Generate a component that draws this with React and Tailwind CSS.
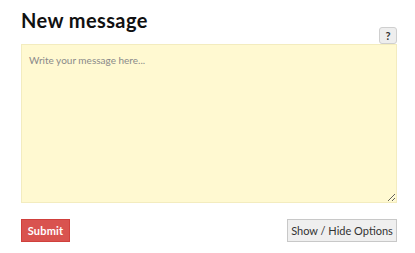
export default function App() {
    return (
        <div className="w-[415px] h-[253px] bg-white pl-[21px] pr-[18px] pt-[9px] font-['Lato',sans-serif] overflow-hidden">
            <h1 className="text-[20px] leading-[22px] font-bold tracking-[0.4px] text-[#111]">New message</h1>

            <div className="flex justify-end mt-[-4px]">
                <button className="w-[18px] h-[17px] rounded-[3px] border border-[#cfcfcf] bg-[#eeeeee] text-[11px] font-bold leading-none text-[#333] flex items-center justify-center">
                    ?
                </button>
            </div>

            <textarea
                className="block w-full h-[159px] bg-[#fff9d1] border border-[#f3ecbf] px-[7px] py-[8px] text-[10px] text-[#555] placeholder:text-[#8a8a8a] outline-none"
                placeholder="Write your message here..."
            />

            <div className="flex justify-between items-start mt-[16px]">
                <button className="h-[23px] w-[49px] bg-[#d9534f] border border-[#d0403c] text-white text-[11px] font-bold tracking-[0.2px] leading-none">
                    Submit
                </button>
                <button className="h-[23px] w-[110px] bg-[#efefef] border border-[#c8c8c8] text-[#333] text-[11px] leading-none">
                    Show / Hide Options
                </button>
            </div>
        </div>
    );
}
